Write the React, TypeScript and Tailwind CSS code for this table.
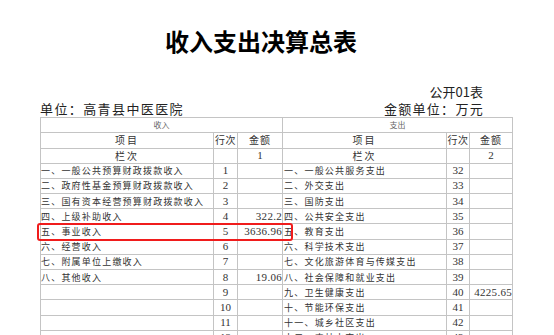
import React from "react";

type Row = { a: string; an: string; av: string; b: string; bn: string; bv: string };

const rows: Row[] = [
  { a: "一、一般公共预算财政拨款收入", an: "1", av: "", b: "一、一般公共服务支出", bn: "32", bv: "" },
  { a: "二、政府性基金预算财政拨款收入", an: "2", av: "", b: "二、外交支出", bn: "33", bv: "" },
  { a: "三、国有资本经营预算财政拨款收入", an: "3", av: "", b: "三、国防支出", bn: "34", bv: "" },
  { a: "四、上级补助收入", an: "4", av: "322.2", b: "四、公共安全支出", bn: "35", bv: "" },
  { a: "五、事业收入", an: "5", av: "3636.96", b: "五、教育支出", bn: "36", bv: "" },
  { a: "六、经营收入", an: "6", av: "", b: "六、科学技术支出", bn: "37", bv: "" },
  { a: "七、附属单位上缴收入", an: "7", av: "", b: "七、文化旅游体育与传媒支出", bn: "38", bv: "" },
  { a: "八、其他收入", an: "8", av: "19.06", b: "八、社会保障和就业支出", bn: "39", bv: "" },
  { a: "", an: "9", av: "", b: "九、卫生健康支出", bn: "40", bv: "4225.65" },
  { a: "", an: "10", av: "", b: "十、节能环保支出", bn: "41", bv: "" },
  { a: "", an: "11", av: "", b: "十一、城乡社区支出", bn: "42", bv: "" },
  { a: "", an: "12", av: "", b: "十二、农林水支出", bn: "43", bv: "" },
];

const td = "border border-[#c4c4c4] p-0 overflow-hidden whitespace-nowrap";
const cjk = "font-['Noto_Sans_CJK_SC','Noto_Sans',sans-serif]";
const serif = "font-['Liberation_Serif','Noto_Sans_CJK_SC',serif]";
const item = `${td} ${cjk} text-left text-[9px] leading-none tracking-[1.2px]`;
const head = `${td} ${cjk} text-center text-[10px] leading-none`;
const num = `${td} ${serif} text-center text-[11px] leading-none`;
const amt = `${td} ${serif} text-right text-[11px] leading-none tracking-[0.3px]`;

export default function App() {
  return (
    <div className="relative w-[554px] h-[335px] overflow-hidden bg-white text-[#222]">
      <div className="pt-[28px] pr-[32px] text-center">
        <div className={`${cjk} text-[24px] leading-[26px] font-bold text-black`}>收入支出决算总表</div>
      </div>
      <div className={`${cjk} ml-[40px] w-[443px] mt-[31px]`}>
        <div className="text-right text-[13px] leading-[14px]">公开01表</div>
        <div className="mt-[2px] flex justify-between text-[13px] leading-[16px] tracking-[1.4px]">
          <span>单位：高青县中医医院</span>
          <span className="tracking-[1.3px] -mr-px">金额单位：万元</span>
        </div>
      </div>
      <table className="ml-[40px] w-[472px] table-fixed border-collapse text-[#333]">
        <colgroup>
          <col className="w-[173px]" />
          <col className="w-[24px]" />
          <col className="w-[45px]" />
          <col className="w-[164px]" />
          <col className="w-[23px]" />
          <col className="w-[43px]" />
        </colgroup>
        <tbody>
          <tr className="h-[15px]">
            <td colSpan={3} className={`${td} ${cjk} text-center text-[8px] leading-none text-[#666]`}>
              收入
            </td>
            <td colSpan={3} className={`${td} ${cjk} text-center text-[8px] leading-none text-[#666]`}>
              支出
            </td>
          </tr>
          <tr className="h-[15.5px]">
            <td className={`${head} tracking-[2px]`}>项目</td>
            <td className={`${head} tracking-[0.5px]`}>行次</td>
            <td className={`${head} tracking-[1px]`}>金额</td>
            <td className={`${head} tracking-[2px]`}>项目</td>
            <td className={`${head} tracking-[0.5px]`}>行次</td>
            <td className={`${head} tracking-[1px]`}>金额</td>
          </tr>
          <tr className="h-[15.2px]">
            <td className={`${head} tracking-[2px]`}>栏次</td>
            <td className={td}></td>
            <td className={num}>1</td>
            <td className={`${head} tracking-[2px]`}>栏次</td>
            <td className={td}></td>
            <td className={num}>2</td>
          </tr>
          {rows.map((r, i) => (
            <tr key={i} className="h-[15.2px]">
              <td className={item}>{r.a}</td>
              <td className={num}>{r.an}</td>
              <td className={amt}>{r.av}</td>
              <td className={`${item} pl-px`}>{r.b}</td>
              <td className={num}>{r.bn}</td>
              <td className={amt}>{r.bv}</td>
            </tr>
          ))}
        </tbody>
      </table>
      <div className="absolute left-[37px] top-[223px] w-[256px] h-[18px] border-2 border-[#f01c1c] rounded-[3px]" />
    </div>
  );
}
